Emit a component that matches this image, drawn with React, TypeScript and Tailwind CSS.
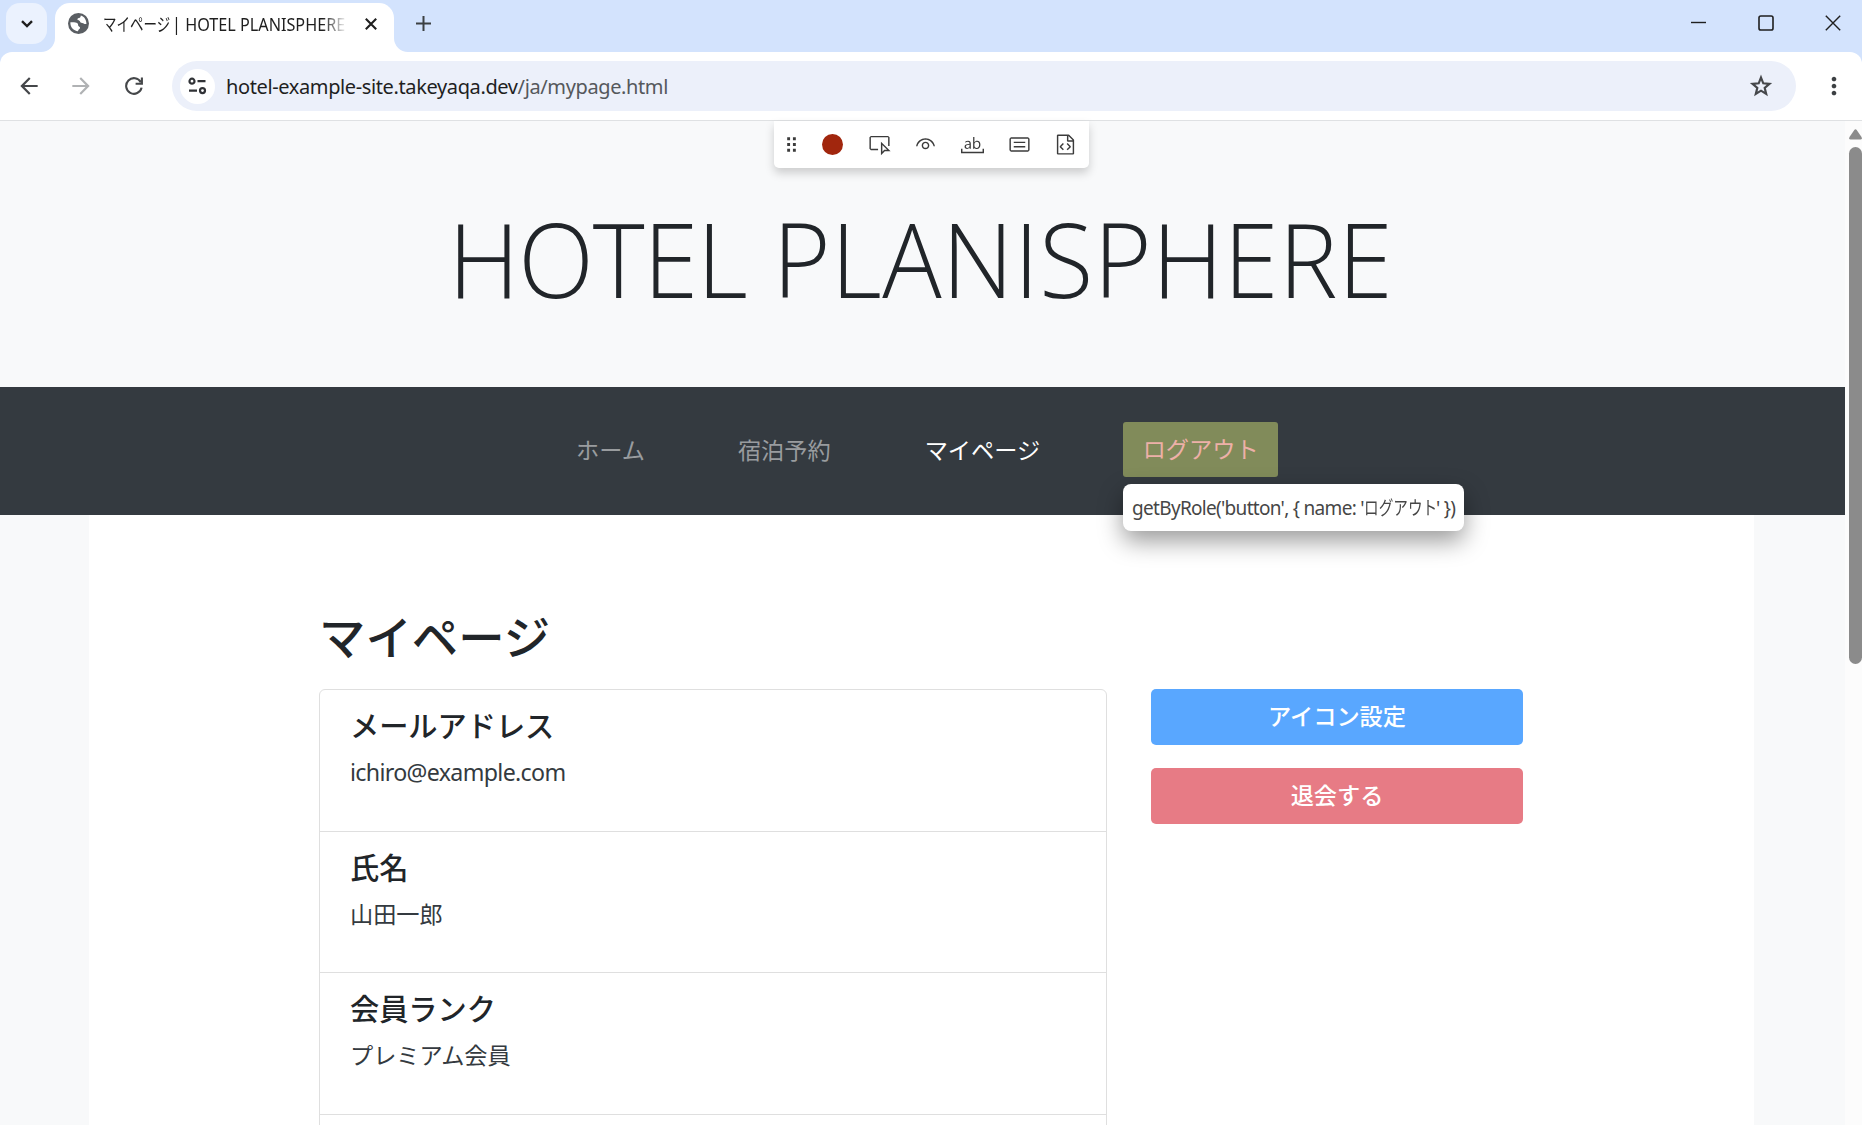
import { MdArrowBack, MdArrowForward, MdMoreVert } from "react-icons/md";
import { VscEye, VscFileCode, VscGripper, VscInspect, VscSymbolConstant, VscWholeWord } from "react-icons/vsc";

const profile = [
  { label: "メールアドレス", value: "ichiro@example.com", latin: true },
  { label: "氏名", value: "山田一郎" },
  { label: "会員ランク", value: "プレミアム会員" },
];

// ── Browser chrome ────────────────────────────────────────────────────────────

function GlobeIcon() {
  return (
    <svg className="mb-[1px] size-[21px] shrink-0" viewBox="0 0 21 21">
      <circle cx="10.500" cy="10.500" r="10.500" fill="#5a5e63" />
      <path
        d="M2.400 9.300c2.800-.2 5.600-.1 7 .9 1.200 1 .3 2.400 1.300 3.100.8.600 1.500.7 1.300 2-.2 1-1.700.9-2 2.900-4.300-.2-8-4-7.600-8.900Z"
        fill="#fff"
      />
      <path
        d="M12.800 2.500c-.2 1.500-.6 2.200-1.800 2.500-1.400.2-1.900.9-1.300 1.900.6.900 1.700.3 2.200 1.300.4 1 .8 1.700 2.300 1.800 1.600.1 1.300 1.300 4.200 1.100.2-4-2-7.600-5.600-8.600Z"
        fill="#fff"
      />
    </svg>
  );
}

function TabStrip() {
  return (
    <div className="flex h-[52px] shrink-0 bg-[#d3e3fd]">
      <div className="flex w-[55px] items-end">
        <button className="mb-[8px] ml-[6px] flex h-[41px] w-[41px] items-center justify-center rounded-[14px] bg-[#ebf2fe]">
          <svg width="12" height="8" viewBox="0 0 12 8" fill="none" stroke="#1f1f1f" strokeWidth="2.4">
            <path d="M1 1.2 6 6l5-4.800" />
          </svg>
        </button>
      </div>
      <div className="relative mt-[3px] flex w-[339px] items-center rounded-t-[15px] bg-white pb-[7px] pl-[13px]">
        {/* Flared corners under the tab */}
        <svg className="absolute -left-[14px] bottom-0" width="14" height="14" viewBox="0 0 14 14">
          <path d="M14 0v14H0A14 14 0 0 0 14 0Z" fill="#fff" />
        </svg>
        <svg className="absolute -right-[14px] bottom-0" width="14" height="14" viewBox="0 0 14 14">
          <path d="M0 0v14h14A14 14 0 0 1 0 0Z" fill="#fff" />
        </svg>
        <GlobeIcon />
        <div className="ml-[14px] flex w-[244px] overflow-hidden whitespace-nowrap text-[18px] text-[#1f1f1f] [mask-image:linear-gradient(to_right,black_90%,transparent_100%)]">
          <span className="w-[66px] shrink-0">
            <span className="inline-block origin-left scale-x-[.75]">マイページ</span>
          </span>
          <span className="ml-[3px] inline-block w-[175px] shrink-0">
            <span className="inline-block origin-left scale-x-[.9]">| HOTEL PLANISPHERE</span>
          </span>
        </div>
        <svg className="ml-[18px] shrink-0" width="12" height="12" viewBox="0 0 12 12" stroke="#1f1f1f" strokeWidth="2.1">
          <path d="m.8.8 10.400 10.400M11.200.8.8 11.200" />
        </svg>
      </div>
      <svg className="ml-[22px] mt-[16px]" width="15" height="15" viewBox="0 0 15 15" stroke="#3c4043" strokeWidth="2">
        <path d="M7.500 0v15M0 7.500h15" />
      </svg>
      <div className="ml-auto mt-[15px] flex h-4 items-center gap-[51px] pr-[21px]">
        <svg width="16" height="16" viewBox="0 0 16 16" stroke="#1f1f1f" strokeWidth="1.400">
          <path d="M0 7.500h15" />
        </svg>
        <svg width="16" height="16" viewBox="0 0 16 16" fill="none" stroke="#1f1f1f" strokeWidth="1.600">
          <rect x="1" y="1" width="14" height="14" rx="1.800" />
        </svg>
        <svg width="16" height="16" viewBox="0 0 16 16" stroke="#1f1f1f" strokeWidth="1.400">
          <path d="m.8.8 14.400 14.400M15.200.8.8 15.200" />
        </svg>
      </div>
    </div>
  );
}

function AddressBar() {
  return (
    <div className="bg-[#d3e3fd]">
      <div className="flex h-[69px] items-center rounded-t-[12px] border-b border-[#dfe1e3] bg-white">
        <MdArrowBack className="ml-[16px] size-[26px] text-[#45474a]" />
        <MdArrowForward className="ml-[26px] size-[26px] text-[#b0b2b4]" />
        <svg className="ml-[31px] size-[18px]" viewBox="0 0 18 18" fill="none" stroke="#45474a" strokeWidth="2.100">
          <path d="M16.600 10.600A7.800 7.800 0 1 1 15.800 5.200M16.900.4v6.300h-6.300" />
        </svg>
        <div className="ml-[29px] flex h-[50px] w-[1624px] items-center rounded-full bg-[#ecf0fa] pl-[8px]">
          <div className="flex size-[35px] items-center justify-center rounded-full bg-white">
            <svg width="19" height="18" viewBox="0 0 19 18" fill="none" stroke="#303236" strokeWidth="2.200">
              <circle cx="4" cy="4.200" r="2.500" />
              <path d="M9.500 4.200h8M1 13.600h8" />
              <circle cx="14.500" cy="13.600" r="2.500" />
            </svg>
          </div>
          <span className="ml-[11px] mt-[1px] text-[20px] tracking-[-0.38px] text-[#1f1f1f]">
            hotel-example-site.takeyaqa.dev<span className="text-[#55585c]">/ja/mypage.html</span>
          </span>
          <svg className="ml-auto mr-[22px] size-[26px]" viewBox="0 0 24 24" fill="none" stroke="#45474a" strokeWidth="2">
            <path d="m12 4.200 2.100 5.300 5.700.5-4.400 3.700 1.400 5.600-4.800-3-4.800 3 1.400-5.600L4.200 10l5.700-.5Z" />
          </svg>
        </div>
        <MdMoreVert className="ml-[24px] size-[28px] text-[#3c4043]" />
      </div>
    </div>
  );
}

// ── Recorder overlay ──────────────────────────────────────────────────────────

function RecorderToolbar() {
  return (
    <div className="absolute left-[774px] top-0 flex h-[47px] w-[315px] items-center rounded-b-[5px] bg-white pl-[6px] text-[#3b3b3b] shadow-[0_5px_10px_rgba(0,0,0,0.18)]">
      <VscGripper className="size-[23px]" />
      <div className="ml-[19px] size-[21px] rounded-full bg-[#a1260d]" />
      <VscInspect className="ml-[25px] size-[23px]" />
      <VscEye className="ml-[23px] size-[23px]" />
      <VscWholeWord className="ml-[24px] size-[23px]" />
      <VscSymbolConstant className="ml-[24px] size-[23px]" />
      <VscFileCode className="ml-[23px] size-[23px]" />
    </div>
  );
}

function LocatorTooltip() {
  return (
    <div className="absolute left-0 top-[62px] flex h-[47px] w-[341px] items-center whitespace-pre rounded-[8px] bg-white pl-[9px] pt-[1px] text-[19px] tracking-[-0.7px] text-[#464646] shadow-[0_10px_24px_rgba(0,0,0,0.4)]">
      {"getByRole('button', { name: '"}
      <span className="w-[72px]">
        <span className="inline-block origin-left scale-x-[.77] tracking-normal">ログアウト</span>
      </span>
      {"' })"}
    </div>
  );
}

// ── Hotel site ────────────────────────────────────────────────────────────────

function NavBar() {
  return (
    <nav className="flex h-[128px] items-center bg-[#343a40] pl-[576px] text-[23.200px] leading-[35px] text-[#999c9f]">
      <a className="-mt-[1px]">ホーム</a>
      <a className="-mt-[1px] ml-[93px]">宿泊予約</a>
      <a className="-mt-[1px] ml-[94px] text-white">マイページ</a>
      <div className="relative -mt-[3px] ml-[83px]">
        <button className="h-[55px] w-[155px] rounded-[3px] bg-[#818b5a] text-[#edb0a8]">ログアウト</button>
        <LocatorTooltip />
      </div>
    </nav>
  );
}

function ProfileCard() {
  return (
    <ul className="h-[500px] w-[788px] rounded-t-[6px] border border-[#dfdfdf]">
      {profile.map((item) => (
        <li key={item.label} className="h-[141.600px] border-b border-[#dfdfdf] pl-[30px] pt-[19px]">
          <h5 className="text-[29.200px] font-medium leading-[35px] text-[#212529]">{item.label}</h5>
          <p
            className={`mt-[11px] text-[23.200px] leading-[35px] text-[#343a40] ${
              item.latin ? "tracking-[-0.66px]" : ""
            }`}
          >
            {item.value}
          </p>
        </li>
      ))}
    </ul>
  );
}

function Scrollbar() {
  return (
    <div className="flex w-[17px] shrink-0 flex-col items-end bg-[#fcfcfc] pt-[8px]">
      <svg width="13" height="11" viewBox="0 0 13 11" fill="#8b8b8b">
        <path d="M5.300.9Q6.500-.5 7.700.9L12.500 8q1 2.200-1.200 2.500H1.700Q-.5 10.200.5 8Z" />
      </svg>
      <div className="mt-[7px] h-[517px] w-[13px] rounded-full bg-[#8b8b8b]" />
    </div>
  );
}

export default function App() {
  return (
    <div className="flex h-[1125px] w-[1862px] flex-col overflow-hidden font-['Noto_Sans','Noto_Sans_CJK_JP',sans-serif]">
      <TabStrip />
      <AddressBar />
      <div className="relative flex min-h-0 flex-1">
        <main className="w-[1845px] overflow-hidden bg-[#f8f9fa]">
          <header className="flex h-[266px] justify-center pr-[4px] pt-[65px]">
            <h1 className="scale-x-[.951] whitespace-nowrap text-[104px] font-light leading-[144px] tracking-[0.5px] text-[#212529] font-['Open_Sans',sans-serif]">
              <span className="tracking-[-1.200px]">HOTEL</span> PLANISPHERE
            </h1>
          </header>
          <NavBar />
          <div className="ml-[89px] h-[700px] w-[1665px] bg-white pl-[230px] pt-[94px]">
            <h2 className="text-[46.400px] font-medium leading-[56px] text-[#212529]">マイページ</h2>
            <div className="mt-[24px] flex items-start gap-[44px]">
              <ProfileCard />
              <div className="flex w-[372px] flex-col gap-[23px] text-[23.200px] font-medium text-white">
                <button className="h-[56px] rounded-[5px] bg-[#59a7ff] pb-[2px]">アイコン設定</button>
                <button className="h-[56px] rounded-[5px] bg-[#e77b85] pb-[2px]">退会する</button>
              </div>
            </div>
          </div>
        </main>
        <Scrollbar />
        <RecorderToolbar />
      </div>
    </div>
  );
}
